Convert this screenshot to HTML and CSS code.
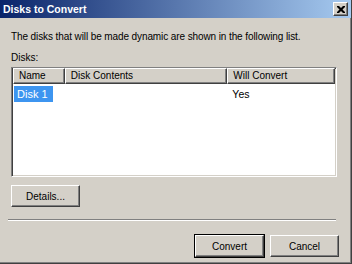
FILE: index.html
```html
<!DOCTYPE html>
<html>
<head>
    <meta charset="UTF-8">
    <title>Disks to Convert</title>
    <link rel="stylesheet" href="styles.css">
</head>
<body>

<div class="window">
    <div class="titlebar">
        <span class="title">Disks to Convert</span>
        <span class="close-btn">
            <svg width="8" height="7" viewBox="0 0 8 7">
                <path d="M0 0h2l2 2 2-2h2v1l-2.5 2.5L8 6v1H6L4 5 2 7H0V6l2.5-2.5L0 1z" fill="#000"/>
            </svg>
        </span>
    </div>

    <div class="dialog-body">
        <p class="intro">The disks that will be made dynamic are shown in the following list.</p>
        <p class="label">Disks:</p>

        <div class="listbox">
            <div class="list-head">
                <div class="col col-name">Name</div>
                <div class="col col-contents">Disk Contents</div>
                <div class="col col-convert">Will Convert</div>
            </div>
            <div class="list-row">
                <div class="cell col-name"><span class="selected">Disk 1</span></div>
                <div class="cell col-contents"></div>
                <div class="cell col-convert">Yes</div>
            </div>
        </div>

        <div class="details-row">
            <button class="btn">Details...</button>
        </div>

        <div class="separator"></div>

        <div class="footer">
            <button class="btn default">Convert</button>
            <button class="btn">Cancel</button>
        </div>
    </div>
</div>

</body>
</html>
```

FILE: styles.css
```css
body {
    margin: 0;
    padding: 0;
    background-color: #d4d0c8;
    font-family: "Liberation Sans", Arial, sans-serif;
    font-size: 10px;
    color: #000;
}

/* Window frame */
.window {
    width: 352px;
    height: 264px;
    box-sizing: border-box;
    border-right: 1px solid #404040;
    border-bottom: 1px solid #404040;
    box-shadow: inset -1px -1px #808080;
    display: flex;
    flex-direction: column;
}

/* Title bar */
.titlebar {
    height: 18px;
    flex-shrink: 0;
    display: flex;
    align-items: center;
    justify-content: space-between;
    padding: 0 3px 0 3px;
    background: linear-gradient(to right, #0a246a, #a6caf0);
    color: white;
    font-weight: bold;
    font-size: 10.5px;
}

.close-btn {
    width: 15px;
    height: 14px;
    box-sizing: border-box;
    background-color: #d4d0c8;
    border: 1px solid;
    border-color: #fff #404040 #404040 #fff;
    box-shadow: inset -1px -1px #808080;
    display: flex;
    align-items: center;
    justify-content: center;
}

/* Dialog content */
.dialog-body {
    flex: 1;
    display: flex;
    flex-direction: column;
    padding: 12px 12px 0 11px;
}

.intro,
.label {
    margin: 0;
    line-height: 13px;
}

.intro {
    letter-spacing: -0.1px;
}

.label {
    margin-top: 8px;
}

/* List view */
.listbox {
    margin-top: 3px;
    width: 326px;
    height: 110px;
    box-sizing: border-box;
    background-color: white;
    border: 1px solid;
    border-color: #808080 #fff #fff #808080;
    box-shadow: inset 1px 1px #404040, inset -1px -1px #d4d0c8;
    padding: 0 1px 1px 1px;
}

.list-head {
    display: flex;
    height: 16px;
}

.col {
    box-sizing: border-box;
    height: 16px;
    line-height: 14px;
    padding-left: 5px;
    background-color: #d4d0c8;
    border: 1px solid;
    border-color: #fff #404040 #404040 #fff;
    box-shadow: inset -1px -1px #808080;
    font-size: 10px;
}

.col-name {
    width: 52px;
}

.col-contents {
    width: 163px;
}

.col-convert {
    width: 108px;
}

.list-row {
    display: flex;
    margin-top: 2px;
    height: 16px;
    line-height: 16px;
    font-size: 11px;
}

.cell {
    box-sizing: border-box;
    padding-left: 5px;
}

.cell.col-name {
    padding-left: 1px;
}

.cell.col-convert {
    font-size: 10.5px;
}

.selected {
    display: inline-block;
    background-color: #3d95f0;
    color: white;
    padding: 0 5px 0 3px;
}

/* Buttons */
.details-row {
    margin-top: 8px;
}

.btn {
    width: 69px;
    height: 22px;
    box-sizing: border-box;
    background-color: #d4d0c8;
    border: 1px solid;
    border-color: #fff #404040 #404040 #fff;
    box-shadow: inset -1px -1px #808080;
    font-family: "Liberation Sans", Arial, sans-serif;
    font-size: 10px;
    color: #000;
    padding: 0;
}

.btn.default {
    outline: 1px solid #000;
}

.separator {
    margin: 12px 0 0 -3px;
    width: 328px;
    height: 2px;
    box-sizing: border-box;
    border-top: 1px solid #808080;
    border-bottom: 1px solid #fff;
}

.footer {
    margin-top: 14px;
    display: flex;
    justify-content: flex-end;
    gap: 6px;
}
```
